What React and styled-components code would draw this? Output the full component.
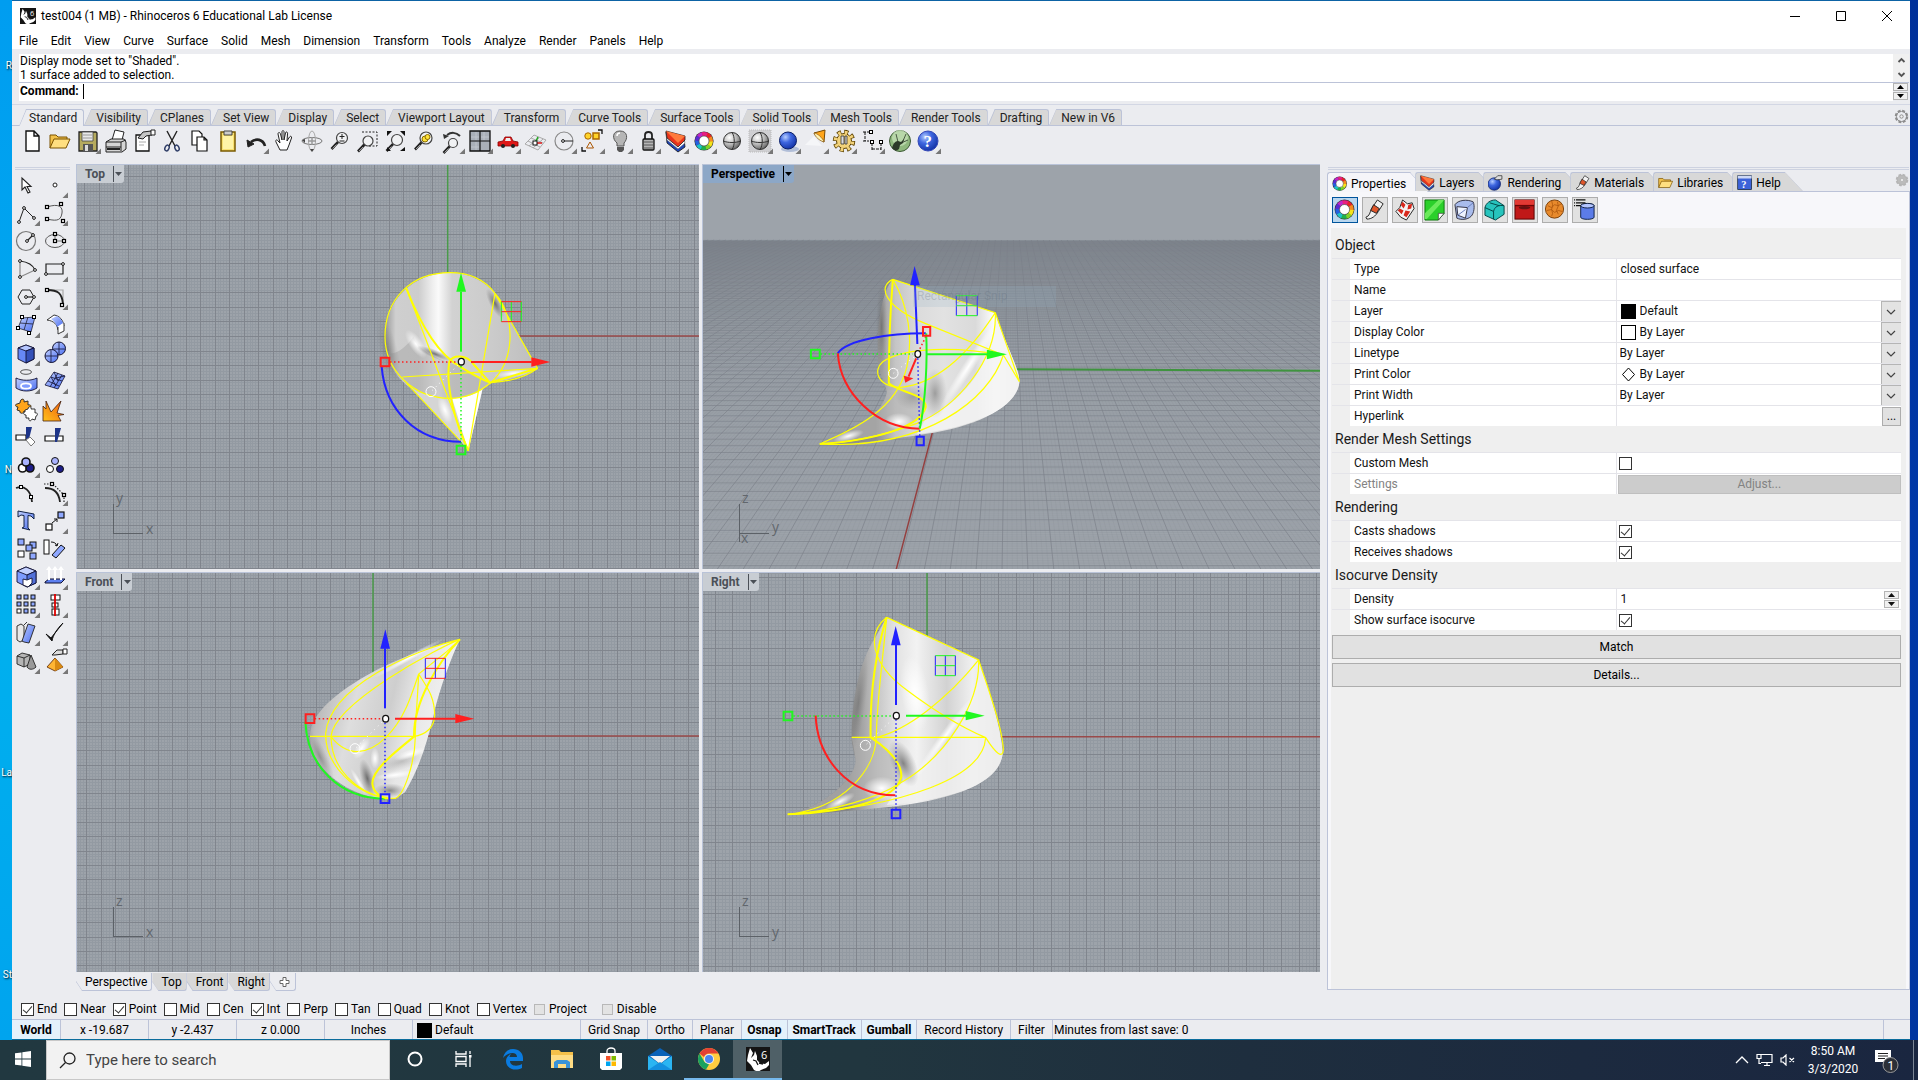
import React from 'react';
import styled, { createGlobalStyle, css } from 'styled-components';

const UI = "Roboto, 'Open Sans', 'Liberation Sans', sans-serif";
const LINE = '#bcc3d8';
const CHROME = '#ebecf0';

const GlobalStyle = createGlobalStyle`
  *, *::before, *::after { box-sizing: border-box; }
  body { margin: 0; font-family: ${UI}; font-size: 12px; line-height: 14px; color: #000; background: #1d2c3c; }
  button, input, select { font: inherit; color: inherit; margin: 0; padding: 0; border: 0; background: none; }
  svg { display: block; }
`;

/* ---------- shell ---------- */
const Screen = styled.div`
  height: 100vh;
  display: flex;
  flex-direction: column;
  overflow: hidden;
`;
const Desktop = styled.div`
  flex: 1;
  min-height: 0;
  display: grid;
  grid-template-columns: 12px minmax(0, 1fr) 8px;
`;
const DesktopEdge = styled.div`
  position: relative;
  overflow: hidden;
  background: ${p => (p.$right ? 'linear-gradient(#00309a, #0038a8 50%, #0035a0)' : 'linear-gradient(#009df0, #00a5ef 30%, #00b0ee 60%, #00a4ee)')};
`;
const DesktopLabel = styled.span`
  position: absolute;
  right: 0;
  top: ${p => p.$y}px;
  font-size: 10px;
  color: #fff;
  text-shadow: 1px 1px 2px #000;
  white-space: nowrap;
`;
const AppWindow = styled.div`
  display: flex;
  flex-direction: column;
  min-height: 0;
  background: ${CHROME};
  border-top: 1px solid #0d63a5;
  border-bottom: 1px solid #0a6c9c;
`;

/* ---------- title, menu, command ---------- */
const TitleBar = styled.header`
  height: 30px;
  flex: none;
  display: flex;
  align-items: center;
  background: #fff;
  padding-left: 8px;
`;
const TitleText = styled.h1`
  flex: 1;
  margin: 0;
  padding-left: 5px;
  font-size: 12px;
  font-weight: 400;
`;
const WinButton = styled.button`
  width: 46px;
  height: 28px;
  display: grid;
  place-items: center;
`;
const MenuBar = styled.nav`
  height: 18px;
  flex: none;
  display: flex;
  align-items: center;
  gap: 13px;
  background: #fff;
  padding: 2px 0 0 7px;
`;
const CommandArea = styled.section`
  margin: 5px 1px 0 7px;
  display: grid;
  grid-template-columns: minmax(0, 1fr) 16px;
  flex: none;
`;
const History = styled.div`
  background: #fff;
  border-bottom: 1px solid ${LINE};
  height: 29px;
  padding-left: 1px;
`;
const Scroller = styled.div`
  background: #f0f0f0;
  border-bottom: 1px solid ${LINE};
  display: grid;
  place-items: center;
`;
const Prompt = styled.label`
  height: 18px;
  background: #fff;
  display: flex;
  align-items: center;
  padding: 0 0 2px 1px;
  font-weight: 700;
  gap: 4px;
`;
const PromptInput = styled.input`
  flex: 1;
  height: 15px;
  outline: 0;
  border-left: 1px solid #000;
`;
const Spinner = styled.div`
  width: 15px;
  margin-right: ${p => p.$inset || 0}px;
  display: grid;
  grid-template-rows: 8px 8px;
  gap: 1px;
`;
const SpinButton = styled.button`
  border: 1px solid #b4b4b4;
  background: #f0f0f0;
  display: grid;
  place-items: center;
`;

/* ---------- toolbar ---------- */
const ToolTabs = styled.div`
  margin-top: 3px;
  padding: 4px 0 0 7px;
  height: 22px;
  flex: none;
  display: flex;
  border-top: 1px solid #d3d7e4;
  border-bottom: 1px solid ${LINE};
`;
const ToolTab = styled.button`
  position: relative;
  height: ${p => (p.$active ? 17 : 16)}px;
  padding: 0 6px 0 ${p => (p.$active ? 10 : 12)}px;
  color: #222;
  background: ${p => (p.$active ? CHROME : '#d8d8d8')};
  border-top: 1px solid ${LINE};
  border-right: 1px solid ${LINE};
  border-top-right-radius: 3px;
  clip-path: polygon(7px 0, 100% 0, 100% 100%, 0 100%);
  white-space: nowrap;
  &::before {
    content: '';
    position: absolute;
    left: 3px;
    top: 0;
    bottom: 0;
    width: 1px;
    background: ${LINE};
    transform: skewX(-23deg);
  }
`;
const TabGear = styled.button`
  margin-left: auto;
  width: 17px;
  height: 15px;
  display: grid;
  place-items: center;
`;
const ToolRow = styled.div`
  height: 38px;
  flex: none;
  display: flex;
  padding: 1px 0 0 6px;
`;
const ToolButton = styled.button`
  width: 28px;
  height: 28px;
  flex: none;
`;

/* ---------- main area ---------- */
const Main = styled.main`
  flex: 1;
  min-height: 0;
  display: grid;
  grid-template-columns: 64px minmax(0, 1244fr) 7px minmax(0, 583fr);
`;
const SideTools = styled.aside`
  padding: 3px 0 0 1px;
`;
const Grip = styled.div`
  height: 3px;
  border-top: 1px solid #cdd2e0;
  border-bottom: 1px solid #cdd2e0;
  margin: ${p => p.$m || '0'};
`;
const SideGrid = styled.div`
  display: grid;
  grid-template-columns: 28px 28px;
  grid-auto-rows: 28px;
  margin-top: 1px;
`;
const Center = styled.div`
  display: flex;
  flex-direction: column;
  min-height: 0;
`;
const Viewports = styled.div`
  flex: 1;
  min-height: 0;
  display: grid;
  grid-template-columns: minmax(0, 623fr) minmax(0, 618fr);
  grid-template-rows: minmax(0, 405fr) minmax(0, 400fr);
  gap: 3px;
`;
const ViewportBox = styled.section`
  position: relative;
  overflow: hidden;
  border: 1px solid #b9c3d8;
  border-width: 1px 0 0 1px;
  background: #9da3aa;
`;
const Scene = styled.svg`
  position: absolute;
  inset: 0;
  width: 100%;
  height: 100%;
`;
const ViewTitle = styled.button`
  position: absolute;
  left: 0;
  top: 0;
  height: 18px;
  display: flex;
  align-items: center;
  padding-left: 8px;
  border-bottom-right-radius: 3px;
  background: ${p => (p.$active ? '#8ca7c7' : '#c8cdd3')};
  color: ${p => (p.$active ? '#000' : '#4b5057')};
  font-weight: 700;
`;
const TitleDrop = styled.span`
  height: 16px;
  width: 11px;
  margin-left: 8px;
  display: grid;
  place-items: center;
  border-left: 1px solid currentColor;
`;
const AxisMark = styled.svg`
  position: absolute;
  left: 32px;
  bottom: 20px;
`;
const SnipGhost = styled.span`
  position: absolute;
  left: 210px;
  top: 121px;
  width: 143px;
  height: 21px;
  padding: 3px 4px;
  font-size: 12px;
  color: rgba(90, 105, 120, 0.25);
  background: rgba(150, 180, 200, 0.2);
`;
const ViewTabs = styled.div`
  height: 20px;
  flex: none;
  display: flex;
  padding-top: 1px;
`;
const ViewTab = styled.button`
  position: relative;
  height: 18px;
  padding: 0 4px 0 9px;
  background: ${p => (p.$plain ? CHROME : '#d8d8d8')};
  border-bottom: 1px solid ${LINE};
  border-right: 1px solid ${LINE};
  border-bottom-right-radius: 3px;
  clip-path: polygon(0 0, 100% 0, 100% 100%, 6px 100%, 0 9px);
  &::before {
    content: '';
    position: absolute;
    left: 2px;
    top: 8px;
    bottom: 0;
    width: 1px;
    background: ${LINE};
    transform: skewX(33deg);
  }
`;

/* ---------- properties panel ---------- */
const Panel = styled.aside`
  display: flex;
  flex-direction: column;
  min-height: 0;
  padding: 3px 0 2px;
`;
const PanelTabs = styled.div`
  display: flex;
  height: 22px;
  padding-top: 2px;
  flex: none;
  border-bottom: 1px solid ${LINE};
`;
const PanelTab = styled.button`
  position: relative;
  height: ${p => (p.$active ? 20 : 19)}px;
  display: flex;
  align-items: center;
  gap: 3px;
  padding: 2px 22px 0 4px;
  margin-right: -13px;
  white-space: nowrap;
  background: ${p => (p.$active ? '#f5f5f9' : '#d8d8d8')};
  border-top: 1px solid ${LINE};
  border-left: 1px solid ${LINE};
  border-top-left-radius: 3px;
  clip-path: polygon(0 0, calc(100% - 18px) 0, 100% 100%, 0 100%);
  &::before {
    content: '';
    position: absolute;
    right: 8px;
    top: 0;
    bottom: 0;
    width: 1px;
    background: ${LINE};
    transform: skewX(43deg);
  }
`;
const PanelBody = styled.div`
  flex: 1;
  min-height: 0;
  border: 1px solid ${LINE};
  border-top: 0;
  background: #f7f7fa;
  padding: 5px 3px 0;
  display: flex;
  flex-direction: column;
`;
const PageButtons = styled.div`
  display: flex;
  gap: 4px;
  padding-left: 1px;
  height: 31px;
  flex: none;
`;
const PageButton = styled.button`
  width: 26px;
  height: 26px;
  display: grid;
  place-items: center;
  border: 1px solid ${p => (p.$active ? '#00549c' : '#adadad')};
  background: ${p => (p.$active ? '#b9d6ee' : '#e1e1e1')};
`;
const Sheet = styled.div`
  flex: 1;
  min-height: 0;
  background: #efefef;
  padding: 4px 5px 0 1px;
`;
const GroupTitle = styled.h2`
  margin: 0;
  height: 26px;
  padding: 5px 3px 0;
  font-size: 14px;
  line-height: 16px;
  font-weight: 400;
  color: #1a1a1a;
`;
const PropRow = styled.div`
  height: 21px;
  display: grid;
  grid-template-columns: 18px minmax(0, 267fr) minmax(0, 285fr);
  border-top: 1px solid #e4e4e9;
  color: ${p => (p.$dim ? '#838383' : '#111')};
  & > * { background: #fff; display: flex; align-items: center; }
  & > :first-child { background: #efefef; }
`;
const PropLabel = styled.label`
  padding-left: 4px;
  border-right: 1px solid #e4e4e9;
`;
const PropValue = styled.div`
  padding-left: ${p => (p.$pad ?? 4)}px;
  gap: 4px;
`;
const Combo = styled.select`
  appearance: none;
  flex: 1;
  min-width: 0;
  height: 18px;
  outline: 0;
`;
const TextBox = styled.input`
  flex: 1;
  min-width: 0;
  height: 18px;
  outline: 0;
`;
const DropMark = styled.span`
  width: 20px;
  height: 20px;
  display: grid;
  place-items: center;
  background: #e3e3e3;
  border: 1px solid #b5b5b5;
  border-width: 1px 0 0 1px;
`;
const Swatch = styled.span`
  width: 15px;
  height: 15px;
  border: 1px solid #000;
  background: ${p => p.$c};
`;
const MoreButton = styled.button`
  width: 19px;
  height: 19px;
  border: 1px solid #adadad;
  background: #e1e1e1;
`;
const AdjustButton = styled.button`
  flex: 1;
  height: 19px;
  border: 1px solid #bfbfbf;
  background: #ccc;
  color: #838383;
`;
const PageActions = styled.div`
  display: grid;
  gap: 4px;
  margin-top: 5px;
`;
const WideButton = styled.button`
  width: 100%;
  height: 24px;
  border: 1px solid #adadad;
  background: #e1e1e1;
`;
const Check = styled.input.attrs({ type: 'checkbox' })`
  appearance: none;
  position: relative;
  width: 13px;
  height: 13px;
  flex: none;
  border: 1px solid #333;
  background: #fff;
  &:checked::before {
    content: '';
    position: absolute;
    left: 3px;
    top: 0;
    width: 5px;
    height: 9px;
    border: solid #333;
    border-width: 0 1px 1px 0;
    transform: rotate(40deg);
  }
  &:disabled { border-color: #b8b8b8; background: #e3e3e3; width: 11px; height: 11px; }
`;

/* ---------- osnap and status ---------- */
const OsnapBar = styled.div`
  height: 27px;
  flex: none;
  display: flex;
  align-items: center;
  gap: 7px;
  padding: 7px 0 0 9px;
`;
const OsnapItem = styled.label`
  display: flex;
  align-items: center;
  gap: ${p => (p.$wide ? 4 : 3)}px;
  margin-right: ${p => (p.$wide ? 8 : 0)}px;
`;
const StatusBar = styled.footer`
  height: 20px;
  flex: none;
  display: flex;
  border-top: 1px solid ${LINE};
`;
const StatusCell = styled.button`
  display: flex;
  align-items: center;
  justify-content: ${p => (p.$start ? 'flex-start' : 'center')};
  gap: 3px;
  padding: 1px ${p => (p.$w ? 4 : p.$on ? 5 : 7)}px 0;
  white-space: nowrap;
  ${p => p.$w && css`width: ${p.$w}px;`}
  ${p => p.$on && css`background: #e4f1fb; font-weight: 700;`}
  border-right: 1px solid ${LINE};
`;
const StatusNote = styled.span`
  flex: 1;
  padding: 3px 0 0 1px;
  border-right: 1px solid ${LINE};
  margin-right: 26px;
`;

/* ---------- taskbar ---------- */
const Taskbar = styled.footer`
  height: 40px;
  flex: none;
  display: flex;
  background: linear-gradient(90deg, #213840, #21363f 45%, #1e2e3e 65%, #1a2640);
  color: #fff;
`;
const TaskButton = styled.button`
  width: ${p => (p.$start ? 46 : 49)}px;
  display: grid;
  place-items: center;
  border-bottom: 2px solid ${p => (p.$open ? '#76b9ed' : 'transparent')};
  background: ${p => (p.$active ? '#4f6067' : 'transparent')};
  background-clip: padding-box;
`;
const SearchBox = styled.label`
  width: 344px;
  display: flex;
  align-items: center;
  gap: 10px;
  padding-left: 12px;
  background: #f2f2f2;
  border: 1px solid #c8c8c8;
`;
const SearchInput = styled.input`
  flex: 1;
  min-width: 0;
  font-size: 15px;
  outline: 0;
  color: #444;
  &::placeholder { color: #444; opacity: 1; }
`;
const Tray = styled.div`
  margin-left: auto;
  display: flex;
  align-items: center;
`;
const TrayButton = styled.button`
  width: ${p => p.$w || 23}px;
  height: 40px;
  display: grid;
  place-items: center;
`;
const Clock = styled.time`
  width: 68px;
  text-align: center;
  line-height: 18px;
`;
const ShowDesktop = styled.button`
  width: 5px;
  height: 40px;
  border-left: 1px solid #7b8594;
  margin-left: 8px;
`;

/* ---------- drawings ---------- */
const K = { fill: 'none', stroke: '#222', strokeWidth: 1.2 };
const Tri = () => <path d="M27 21.500v5.500h-5.500z" fill="#777" stroke="none" />;
const Dot = ({ x, y }) => <rect x={x - 1.5} y={y - 1.5} width="3" height="3" fill="#fff" stroke="#000" />;
const Pin = ({ x, y }) => <circle cx={x} cy={y} r="1.4" fill="#fff" stroke="#000" strokeWidth=".9" />;
const Lens = ({ x = 15, y = 11, r = 5.5, fill = '#f1f2f4' }) => (
  <g>
    <path d={`M${x - r * 0.7} ${y + r * 0.7}L${x - r - 5} ${y + r + 5.5}`} stroke="#222" strokeWidth="2.6" />
    <path d={`M${x - r} ${y + r + 1}L${x - r - 4} ${y + r + 5}`} stroke="#999" strokeWidth="1" />
    <circle cx={x} cy={y} r={r} fill={fill} stroke="#444" strokeWidth="1.2" />
  </g>
);
const Wheel = ({ cx = 14, cy = 14, r = 7, w = 4 }) => {
  const cols = ['#e8202a', '#f58a1f', '#f6e21c', '#7fd12a', '#1fb04b', '#1cc3c9', '#2460e0', '#5a2bd0', '#c026c8', '#e82080'];
  const n = cols.length;
  return (
    <g>
      <circle cx={cx} cy={cy} r={r + w / 2 + 0.6} fill="#333" />
      {cols.map((c, i) => {
        const a = (i / n) * 2 * Math.PI - 1.2;
        const b = ((i + 1.1) / n) * 2 * Math.PI - 1.2;
        return <path key={c} d={`M${cx + r * Math.cos(a)} ${cy + r * Math.sin(a)}A${r} ${r} 0 0 1 ${cx + r * Math.cos(b)} ${cy + r * Math.sin(b)}`} stroke={c} strokeWidth={w} fill="none" />;
      })}
      <circle cx={cx} cy={cy} r={r - w / 2} fill="#fff" stroke="#444" strokeWidth=".6" />
    </g>
  );
};
const LayersArt = () => (
  <g strokeLinejoin="round">
    <path d="M4 5l1 11 11 9 7-5-1-8z" fill="#1d46b8" stroke="#111" strokeWidth=".8" />
    <path d="M4 5l1 8 11 9 7-6-1-4z" fill="#fff" stroke="#555" strokeWidth=".5" />
    <path d="M4 4l1 7 11 9 7-7v-4z" fill="#e8341c" stroke="#222" strokeWidth=".8" />
    <path d="M4 4l19 5-7 7z" fill="#ff7a3c" />
  </g>
);
const Folder = () => (
  <g stroke="#7a5200" strokeLinejoin="round">
    <path d="M4 21V8h6l2 2h9v3" fill="#f2c14a" />
    <path d="M4 21l4-9h16l-4 9z" fill="#ffdf80" />
  </g>
);
const Ball = ({ fill }) => (
  <g>
    <circle cx="14" cy="14" r="8.5" fill={fill} stroke="#333" />
    <path d="M14 5.500c3 4 3 13 0 17M5.500 14c4 2 13 2 17 0" fill="none" stroke="#333" />
  </g>
);
const RhinoLogo = ({ size }) => (
  <svg width={size} height={size} viewBox="0 0 24 24" aria-hidden="true">
    <path d="M0 0h24v24H0z" fill="#141414" />
    <path d="M4 1l3 5-2 5 3-3 1-4 2 5v4l3 3 5 1 4-3v4l-3 3-5 2-3 2-4-2-3-5-4-4 1-6z" fill="#fff" />
    <path d="M7 13l3 1 2 4M13 16l4 1" stroke="#141414" fill="none" strokeWidth="1.3" />
    <text x="15" y="12" fontSize="11" fontFamily="Open Sans, sans-serif" fill="#fff">6</text>
  </svg>
);
const GearArt = ({ s = 15, fill = 'none', c = '#8d8d8d' }) => (
  <svg width={s} height={s} viewBox="0 0 16 16">
    <circle cx="8" cy="8" r="6" fill={fill} stroke={c} strokeWidth="2.4" strokeDasharray="3 1.710" />
    <circle cx="8" cy="8" r="5.400" fill={fill} stroke={c} />
    <circle cx="8" cy="8" r="1.800" fill="#f0f0f0" stroke={c} />
  </svg>
);

const art = {
  new: <path d="M8 4h8l5 5v15H8z M16 4v5h5" fill="#fff" stroke="#111" strokeWidth="1.4" />,
  open: <Folder />,
  save: <g><path d="M5 5h17l1 1v18H5z" fill="#b5aa5e" stroke="#222" strokeWidth="1.3" /><path d="M8 5h11v9H8z" fill="#e9e9e9" stroke="#444" strokeWidth=".8" /><path d="M9 17h10v7H9z" fill="#555" /><path d="M11 18h3v6h-3z" fill="#ddd" /><path d="M9 8h9M9 11h9" stroke="#999" /><Tri /></g>,
  print: <g stroke="#222" strokeLinejoin="round"><path d="M10 13l3-10 9 2-2 8z" fill="#fff" /><path d="M4 15l5-3h13l2 3v7l-4 3H4z" fill="#d5d5d5" /><path d="M4 15h15l5-2M4 20h15M19 15v9" fill="none" /><path d="M5 22h13" strokeWidth="2" /></g>,
  props: <g><path d="M6 8h13v16H6z" fill="#fff" stroke="#111" strokeWidth="1.3" /><path d="M9 15h7M9 18h5" stroke="#aaa" /><path d="M8 11l5-6 8-1 1 4-6 1-3 3z" fill="#c5c5c5" stroke="#222" /><path d="M21 3h4v5h-4z" fill="#fff" stroke="#222" /></g>,
  cut: <g {...K} strokeWidth="1.400"><path d="M9 4l8 15M19 4l-8 15" /><ellipse cx="9" cy="21" rx="2" ry="3" transform="rotate(25 9 21)" stroke="#2d3c66" /><ellipse cx="19" cy="21" rx="2" ry="3" transform="rotate(-25 19 21)" stroke="#2d3c66" /></g>,
  copy: <g fill="#fff" stroke="#111" strokeWidth="1.200"><path d="M6 4h7l3 3v11H6z" /><path d="M11 10h7l3 3v11H11z M18 10v3h3" /></g>,
  paste: <g><path d="M7 5h14v19H7z" fill="#f8e071" stroke="#7a5a00" strokeWidth="1.500" /><path d="M10 4h8v4h-8z" fill="#ccc" stroke="#444" /><path d="M9 9h10v13H9z" fill="#fff3a6" /></g>,
  undo: <g><path d="M23 19c-2-7-9-8-14-4" fill="none" stroke="#222" strokeWidth="2.600" /><path d="M5 13l1 7 6-3z" fill="#222" stroke="#222" /><Tri /></g>,
  hand: <path d="M10 23l-4-8c-1-2 1-3 2-1l2 2-2-9c0-2 2-2 2.500 0l1.500 6V5c0-2 2-2 2 0v8l1.500-7c.5-2 2.500-1 2 1L17 14l2.500-4c1-1.500 2.500-.5 2 1L19 18l-2 5z" fill="#fff" stroke="#222" />,
  rotate: <g fill="none"><ellipse cx="14" cy="14" rx="10" ry="3.500" stroke="#777" /><ellipse cx="14" cy="14" rx="3.500" ry="10" stroke="#aaa" /><path d="M14 10v8M10 14h8" stroke="#999" strokeWidth="1.500" /><path d="M14 25l-2-3h4zM4 13l3 3v-4z" fill="#444" /></g>,
  zoomDyn: <g><Lens x={16} /><path d="M13.500 9.500h5M16 7v5M13.500 14h5" stroke="#222" /></g>,
  zoomWin: <g><path d="M8 5h15v14H14" fill="none" stroke="#222" strokeDasharray="2 1.500" /><Lens x={14} y={14} r={5} /></g>,
  zoomExt: <g><Lens x={15} y={13} r={5.5} /><path d="M5 9V4h5zM23 9V4h-5zM23 20v4h-5zM5 20v4h4z" fill="#111" /></g>,
  zoomSel: <g><Lens x={16} r={6} /><circle cx="15" cy="12" r="3" fill="#ffe23a" stroke="#8a6d00" /><circle cx="17.500" cy="10" r="2.500" fill="#ffe23a" stroke="#8a6d00" /></g>,
  undoView: <g><Lens x={15} y={16} r={4.500} /><path d="M22 9c-4-4-9-4-13-1" fill="none" stroke="#333" strokeWidth="2" /><path d="M5 7l1 5 5-3z" fill="#333" /><Tri /></g>,
  views: <g><path d="M4 4h20v20H4z" fill="#a9afb8" stroke="#111" strokeWidth="1.300" /><path d="M14 4v20M4 14h20" stroke="#111" strokeWidth="1.200" /><path d="M5 10h8M10 5v8M15 10h8M18 5v8M5 20h8M10 15v8" stroke="#c7ccd2" strokeWidth=".7" /><Tri /></g>,
  car: <g><path d="M4 15l5-1 2-4h6l2 4 5 1v4H4z" fill="#e01818" stroke="#800" strokeWidth=".8" /><path d="M11 14l1-3h4l1 3z" fill="#eee" /><circle cx="9" cy="19" r="2" fill="#222" /><circle cx="19" cy="19" r="2" fill="#222" /><Tri /></g>,
  cplane: <g fill="none" stroke="#aaa"><path d="M3 17l9-9 12 5-8 10zM7 19l10-8M11 21l10-9M6 14l12 6M9 11l12 5" /><path d="M14 16h6" stroke="#d22" strokeWidth="1.600" /><path d="M13 16l3-6" stroke="#2a2" strokeWidth="1.600" /><rect x="11" y="14" width="4" height="4" fill="#fff" stroke="#111" /><Tri /></g>,
  radius: <g><circle cx="14" cy="14" r="9" {...K} stroke="#888" /><path d="M14 14h9" stroke="#222" /><Pin x={13} y={14} /><Tri /></g>,
  shapes: <g><circle cx="10" cy="9" r="3.200" fill="#ffd42a" stroke="#a60" /><rect x="15" y="6" width="6" height="6" fill="#ffd42a" stroke="#a60" strokeWidth="1.500" /><path d="M12 15l3.500 6h-7z" fill="none" stroke="#a50" /><path d="M20 3h4v4M4 20v4h4" fill="none" stroke="#111" strokeWidth="1.300" /><Tri /></g>,
  bulb: <g><path d="M14 4c8 0 8 8 4 12v3h-7v-3C6 12 6 4 14 4z" fill="#b5b5b5" stroke="#555" /><path d="M11 20h7v3l-2 2h-3l-2-2z" fill="#555" /><path d="M11 9c0-2 1-3 3-3" stroke="#fff" strokeWidth="1.500" fill="none" /><Tri /></g>,
  lock: <g><path d="M11 13V8c0-4 7-4 7 0v5" fill="none" stroke="#222" strokeWidth="1.800" /><rect x="9" y="12" width="11" height="11" rx="1" fill="#b5b5b5" stroke="#111" strokeWidth="1.300" /><path d="M10 15h9M10 18h9M10 21h9" stroke="#555" /><Tri /></g>,
  layers: <g><LayersArt /><Tri /></g>,
  layersTab: <LayersArt />,
  wheel: <g><Wheel /><Tri /></g>,
  wheelPage: <Wheel r={7.5} w={4.5} />,
  shade: <Ball fill="url(#gGray)" />,
  shadeTex: <g><path d="M3 3h22v22H3z" fill="#cfcfd2" stroke="#bbb" strokeDasharray="1 1" /><Ball fill="url(#gGray)" /><Tri /></g>,
  render: <g><ellipse cx="16" cy="22" rx="9" ry="3" fill="#8aa0c8" opacity=".6" /><circle cx="14" cy="13.500" r="8.500" fill="url(#gBlue)" stroke="#0a1e66" /><Tri /></g>,
  spot: <g><path d="M3 18l9-9 8 10z" fill="#fff" opacity=".5" /><path d="M12 6l11-3-1 12c-2-1-8-5-10-9z" fill="#ffa51a" stroke="#7a4a00" /><path d="M12 6c3 0 9 5 10 9-4-1-9-5-10-9z" fill="#fff2b5" stroke="#7a4a00" strokeWidth=".6" /><Tri /></g>,
  gear: <g><circle cx="14" cy="14" r="8.500" fill="none" stroke="#5d4300" strokeWidth="5.500" strokeDasharray="3.800 2.870" /><circle cx="14" cy="14" r="7.500" fill="#f2d27a" stroke="#5d4300" /><circle cx="14" cy="14" r="8.500" fill="none" stroke="#f2d27a" strokeWidth="3.800" strokeDasharray="2.600 4.070" strokeDashoffset="-.6" /><path d="M11 9h3v8h-3zM15 9h2v8h-2z" fill="#ddd" stroke="#333" strokeWidth=".8" /><Tri /></g>,
  dims: <g fill="none" stroke="#111"><path d="M7 5v9M5 5h6M5 14h6M14 16v7M23 16v7M14 22h9" strokeDasharray="3 1" /><Dot x={13} y={5} /><Dot x={14} y={15} /><Dot x={23} y={15} /><Tri /></g>,
  hopper: <g><circle cx="14" cy="14" r="10.500" fill="#8fb87e" stroke="#3c5a34" /><circle cx="14" cy="11" r="8" fill="#c5e2b8" opacity=".75" /><path d="M6 21c1-4 3-7 6-7l3 1 3-3-1 4-3 2-1 4c-2 2-5 2-7-1z" fill="#2d3a2a" /><path d="M12 15l-2-8M15 16l7-3M17 14l3-7" stroke="#2d3a2a" strokeWidth=".8" /></g>,
  help: <g><circle cx="14" cy="14" r="10" fill="url(#gBlue)" stroke="#3548b8" /><text x="9.500" y="20" fontSize="17" fontWeight="700" fontFamily="Liberation Serif, serif" fill="#fff">?</text><Tri /></g>,

  pointer: <path d="M9 7v12l3-3 3 6 2-1-3-5.500h4z" fill="#fff" stroke="#222" strokeWidth="1.100" />,
  point: <g><circle cx="14" cy="14" r="2" fill="#fff" stroke="#222" /><Tri /></g>,
  polyline: <g {...K}><path d="M6 23l5-14 10 10" strokeWidth="1" /><Pin x={6} y={23} /><Pin x={11} y={9} /><Pin x={21} y={19} /><Tri /></g>,
  curve: <g {...K}><path d="M6 8c12-4 16 0 15 6s-3 9-15 6" stroke="#555" strokeWidth="1" /><Dot x={6} y={8} /><Dot x={20} y={5} /><Dot x={6} y={20} /><Dot x={22} y={22} /><Tri /></g>,
  circle: <g {...K}><circle cx="13" cy="14" r="9.500" stroke="#777" /><path d="M14 14l6-6" /><Pin x={14} y={14} /><Pin x={20} y={8} /><Tri /></g>,
  ellipse: <g {...K}><ellipse cx="14" cy="14" rx="9.500" ry="6.500" stroke="#555" strokeWidth="1" /><path d="M14 14h9M14 14V7" stroke="#777" /><Dot x={14} y={14} /><Dot x={14} y={7} /><Dot x={23} y={14} /><Tri /></g>,
  arc: <g {...K}><path d="M7 22V6" stroke="#888" /><path d="M7 6c8 1 13 4 15 9" /><path d="M22 15L7 22" stroke="#888" /><Pin x={7} y={6} /><Pin x={22} y={15} /><Pin x={7} y={22} /><Tri /></g>,
  rect: <g {...K}><path d="M5 9h17v10H5z" /><Pin x={22} y={9} /><Pin x={5} y={19} /><Tri /></g>,
  polygon: <g {...K}><path d="M5 14l4-7h8l4 7-4 7H9z" strokeWidth="1" /><path d="M13 14h8" /><Pin x={13} y={14} /><Pin x={21} y={14} /><Tri /></g>,
  fillet: <g {...K}><path d="M6 7h16v14" stroke="#aaa" /><path d="M6 7c11 0 15 3 16 14" strokeWidth="1.900" /><Dot x={6} y={7} /><Dot x={21} y={22} /><Tri /></g>,
  surf: <g><path d="M9 7l13-1-4 15-13-4z" fill="url(#gLite)" stroke="#223" strokeWidth=".8" /><path d="M15 6l-4 13M7 12l13 1" stroke="#223" strokeWidth=".8" /><Dot x={9} y={6} /><Dot x={21} y={6} /><Dot x={5} y={17} /><Dot x={16} y={22} /><Tri /></g>,
  blend: <g stroke="#222" strokeWidth=".9"><path d="M6 9l7-5c6 1 9 5 10 11l-6 4C16 13 13 10 6 9z" fill="#fff" /><path d="M10 8l6-3c3 2 5 4 6 7l-6 4c-1-4-3-6-6-8z" fill="url(#gLite)" stroke="none" /><path d="M17 16v7l6-3v-8" fill="#fff" /><Tri /></g>,
  box: <g stroke="#113" strokeLinejoin="round" strokeWidth=".9"><path d="M5 9l8-3 8 3v11l-8 4-8-4z" fill="#6688f5" /><path d="M5 9l8-3 8 3-8 3z" fill="#b5c6ff" /><path d="M13 12v12l8-4V9z" fill="#3450b8" /><Tri /></g>,
  boolean: <g stroke="#113"><circle cx="18" cy="9.500" r="6.500" fill="url(#gLite)" /><circle cx="10.500" cy="17" r="6.500" fill="url(#gLite)" /><path d="M4 17h13M10 11v13M12 10h12M18 3v13" strokeWidth=".8" fill="none" /><Tri /></g>,
  project: <g stroke="#113" strokeWidth=".9"><ellipse cx="13" cy="5" rx="5.500" ry="2.300" fill="none" stroke="#444" /><path d="M3 11c6 3 15 3 21 0v10c-6 4-15 4-21 0z" fill="url(#gLite)" /><ellipse cx="13" cy="19" rx="5" ry="2.700" fill="#7f9cff" stroke="#fff" strokeWidth="1.800" /><Tri /></g>,
  mesh: <g stroke="#113" strokeWidth=".8"><path d="M13 5l11 4-7 13-13-4z" fill="url(#gLite)" /><path d="M17 6l-8 14M21 8l-8 13M10 10l11 4M7 14l11 5M13 5l4 9M10 10l5 9M24 9l-9 2" fill="none" /><Tri /></g>,
  join: <g stroke="#222" strokeWidth=".9"><path d="M4 9l3-1c0-5 5-5 4-1l4-1v4c4-1 4 3 0 4l-1 3-3-1c0 3-5 3-4 0l-3-1 1-3c-3 0-3-3-1-3z" fill="#ffa51a" /><path d="M12 15l3-1c0-3 4-3 3 0l4 0v4c3-1 3 3 1 3l-1 4-3-1c-1 3-4 2-3-1l-3 0 0-3c-3 0-3-3-1-3z" fill="#fff" /></g>,
  explode: <path d="M2 11l3 3V6l5 11L20 6l-4 12 7 1.500-6 1 3 5.500H2z" fill="url(#gFire)" stroke="#421" strokeWidth=".8" />,
  trim: <g stroke="#111"><path d="M3 12h10v5H3z" fill="#fff" strokeWidth="1.200" /><path d="M13 4h6l-3 12h-3z" fill="#1d3488" stroke="none" /><path d="M13 17l4-3 5 5-4 4z" fill="#fff" stroke="#777" /></g>,
  split: <g stroke="#111"><path d="M4 13h18v5H4z" fill="#fff" strokeWidth="1.200" /><path d="M14 5h6l-4 14h-2z" fill="#1d3488" stroke="none" /></g>,
  group: <g stroke="#111" strokeWidth="1.600"><circle cx="9.500" cy="17" r="4" fill="#fff" /><circle cx="17" cy="17" r="4" fill="#1d1d88" /><circle cx="13" cy="11" r="4" fill="#a9b2ff" /><Tri /></g>,
  ungroup: <g stroke="#111"><circle cx="14" cy="10" r="3.500" fill="#a9b2ff" /><circle cx="9" cy="18" r="3.500" fill="#fff" /><circle cx="19" cy="18" r="3.500" fill="#1d1d88" /></g>,
  pts: <g {...K} strokeWidth="1.800"><path d="M3 9c8-3 15 2 16 14" /><g strokeWidth="1"><Dot x={8} y={8} /><Dot x={18} y={18} /></g></g>,
  cpts: <g {...K}><path d="M4 9c9 0 14 5 15 14" strokeWidth="1.800" /><path d="M3 5h9l11 11v8" strokeDasharray="1.500 1.500" /><Dot x={11} y={5} /><Dot x={23} y={16} /><Tri /></g>,
  text: <path d="M5 4l16 3v5l-3-3-3-.5V21l2 2-8-2 2-1V8.500L8 8l-3 2z" fill="url(#gLite)" stroke="#124" />,
  move: <g stroke="#111"><rect x="5" y="17" width="6" height="6" fill="#fff" strokeWidth="1.200" /><rect x="17" y="5" width="6" height="6" fill="#8fa8ff" strokeWidth="1.200" /><path d="M11 16l5-4M13 12h3v3" fill="none" /><Tri /></g>,
  copies: <g stroke="#111"><rect x="5" y="4" width="6" height="6" fill="#8fa8ff" /><rect x="17" y="7" width="6" height="6" fill="#8fa8ff" /><rect x="13" y="10" width="6" height="6" fill="#8fa8ff" /><rect x="5" y="16" width="6" height="6" fill="#fff" /><rect x="17" y="18" width="6" height="6" fill="#8fa8ff" /></g>,
  rotate2: <g stroke="#111"><rect x="3" y="5" width="5" height="14" fill="#fff" /><path d="M11 20l9-10 4 3-9 10z" fill="#8fa8ff" /><path d="M10 7c3 0 5 1 6 4M14 10l2 1 1-3" fill="none" strokeWidth="1" /></g>,
  cage: <g stroke="#113" strokeLinejoin="round" strokeWidth=".9"><path d="M4 8l9-4 10 4v12l-9 4-10-5z" fill="#7d9bff" /><path d="M4 8l9-4 10 4-9 4z" fill="#c3d0ff" /><path d="M14 12v12l9-4V8z" fill="#5270d8" /><path d="M10 16l4 1 5-2v5l-4 4-5-2z" fill="#fff" /><Tri /></g>,
  extrude: <g><path d="M4 19l4-3h16l-4 4H4z" fill="#5d80f0" stroke="#113" /><path d="M8 17V6M14 17V6M20 17V6" stroke="#fff" strokeWidth="2" /><path d="M8 3l3 4H5zM14 3l3 4h-6zM20 3l3 4h-6z" fill="#fff" /><Tri /></g>,
  array: <g stroke="#111">{[4, 11, 18].map(x => [4, 11, 18].map(y => <rect key={`${x}-${y}`} x={x} y={y} width="4" height="4" fill={x === 4 && y === 18 ? '#fff' : '#8fa8ff'} />))}<Tri /></g>,
  align: <g stroke="#111" fill="#fff"><rect x="10" y="4" width="9" height="5" /><rect x="11" y="12" width="6" height="4" /><rect x="11" y="18" width="7" height="6" /><path d="M14 3v22" stroke="#d00" strokeWidth="1.800" /><Tri /></g>,
  bend: <g stroke="#222" strokeWidth=".9"><path d="M4 7l4-2 3 2v14l-4 2-3-2z" fill="#e8e8e8" /><path d="M11 6l3-3M9 22l6-17 7 2-6 17-5-1z" fill="url(#gLite)" /><Tri /></g>,
  check: <g><path d="M5 15l5 4L22 4C16 10 12 16 11 22z" fill="#111" stroke="#111" /><Tri /></g>,
  solids: <g stroke="#222" strokeLinejoin="round" strokeWidth=".9"><path d="M4 9l5-3 8 2v9l-6 3-7-3z" fill="#b5b5b5" /><path d="M4 9l7 2v9M11 11l6-3" fill="none" /><path d="M18 8l5 12c-3 3-7 3-9 0z" fill="#999" /><Tri /></g>,
  pyramid: <g><path d="M14 11l8 9-8 4-8-4z" fill="#ffb533" stroke="#631" strokeWidth=".9" /><path d="M14 11v13l8-4z" fill="#d98a12" /><path d="M11 8l5-5h6v4l-8 1z" fill="#ddd" stroke="#222" /><path d="M22 2h4v5h-4z" fill="#fff" stroke="#222" /><Tri /></g>,

  tube: <g stroke="#222"><path d="M5 22c4-1 4-5 6-9l6-9 6 4-5 8c-3 5-7 8-12 8z" fill="#f3f3f3" /><path d="M13 9l6 4-3 5-6-3z" fill="#e0562a" /></g>,
  texture: <g stroke="#222" strokeLinejoin="round"><path d="M12 4l5 4 5-1 2 6-8 12-6-3-5-6 4-4z" fill="#f3f3f3" /><path d="M12 6l3 3-2 4-3-4zM18 9l4-1-1 5-4 1zM9 13l4 2-2 4-4-4zM15 15l5 1-4 6-3-2z" fill="#d8281c" stroke="none" /></g>,
  decal: <g><path d="M4 4h20v14l-6 7H4z" fill="#2bd02b" stroke="#0a780a" /><path d="M4 18L18 4h6L6 24H4z" fill="#6bea5b" /><path d="M18 25v-7h6z" fill="#fff" stroke="#333" strokeWidth=".7" /></g>,
  cubeBlue: <g stroke="#334" strokeLinejoin="round"><path d="M4 9c3-5 13-6 19-3 2 4 1 12-2 15-4 4-11 4-15 2z" fill="#a9bcec" /><path d="M6 11l11 1-2 11-8-3z" fill="#eef3ff" /><path d="M17 12l6-5M7 20l8-6" stroke="#6478b8" /></g>,
  cubeTeal: <g stroke="#044" strokeLinejoin="round"><path d="M4 12c1-5 6-8 11-8l9 6v9l-9 6-11-5z" fill="#27c4bd" /><path d="M4 12l9 4c1-5 5-7 11-6M13 16v8M9 7l10 3" fill="none" /></g>,
  book: <g><rect x="4" y="4" width="20" height="20" fill="#c01818" stroke="#500" /><path d="M4 4h20v5H4z" fill="#e23a34" /><path d="M4 10h20" stroke="#500" /><ellipse cx="14" cy="12" rx="6" ry="1.800" fill="#611" /></g>,
  orange: <g><circle cx="14" cy="13.500" r="9.500" fill="#e88a2c" stroke="#7a3d05" /><path d="M7 10l4 2 3-3 4 1 3-2M6 15l5-1 3 3 4-2 4 1M11 5l1 4-1 5 1 4-1 3M17 6l1 4-2 5 2 4" stroke="#a9540c" fill="none" strokeWidth=".8" /></g>,
  data: <g><path d="M10 10c0-3 14-3 14 0v12c0 3-14 3-14 0z" fill="#5c7ce8" stroke="#124" /><ellipse cx="17" cy="10" rx="7" ry="2.400" fill="#b4c5ff" stroke="#124" /><path d="M5 4h10M5 7h10M5 10h5M3 4h1M3 7h1M3 10h1" stroke="#111" strokeWidth="1.300" /></g>,
  renderTab: <g><circle cx="12" cy="16" r="9" fill="url(#gBlue)" stroke="#0a1e66" /><path d="M12 9l5-5h6v5l-7 1z" fill="#ddd" stroke="#222" /></g>,
  helpTab: <g><rect x="4" y="4" width="20" height="20" fill="#3c62d8" stroke="#123" /><path d="M4 4h20v4H4z" fill="#cdd8f5" /><text x="9" y="22" fontSize="15" fontWeight="700" fill="#fff" fontFamily="Liberation Serif, serif">?</text></g>,
};

const Icon = ({ name, size = 28, tight }) => (
  <svg width={size} height={size} viewBox={tight ? '3 3 23 23' : '0 0 28 28'} aria-hidden="true">{art[name]}</svg>
);

const Defs = styled.svg`
  position: absolute;
`;
const SharedDefs = () => (
  <Defs width="0" height="0" aria-hidden="true">
    <defs>
      <radialGradient id="gGray" cx=".35" cy=".3" r=".8"><stop offset="0" stopColor="#fff" /><stop offset=".5" stopColor="#b9b9b9" /><stop offset="1" stopColor="#555" /></radialGradient>
      <radialGradient id="gBlue" cx=".35" cy=".3" r=".8"><stop offset="0" stopColor="#b5cdff" /><stop offset=".4" stopColor="#3f67e0" /><stop offset="1" stopColor="#0b2a9c" /></radialGradient>
      <linearGradient id="gLite" x1="0" y1="0" x2="1" y2="1"><stop offset="0" stopColor="#c2d0ff" /><stop offset="1" stopColor="#4a6ef0" /></linearGradient>
      <linearGradient id="gFire" x1="0" y1="1" x2="1" y2="0"><stop offset="0" stopColor="#ffc21a" /><stop offset="1" stopColor="#f05a10" /></linearGradient>
      <linearGradient id="sTop"><stop offset="0" stopColor="#999" /><stop offset=".07" stopColor="#cfcfcf" /><stop offset=".22" stopColor="#cdcdcd" /><stop offset=".31" stopColor="#eee" /><stop offset=".35" stopColor="#fafafa" /><stop offset=".44" stopColor="#d2d2d2" /><stop offset=".7" stopColor="#cbcbcb" /><stop offset="1" stopColor="#bdbdbd" /></linearGradient>
      <linearGradient id="sFront" x1="0" y1=".1" x2="1" y2=".35"><stop offset="0" stopColor="#777" /><stop offset=".14" stopColor="#bcbcbc" /><stop offset=".35" stopColor="#dedede" /><stop offset=".58" stopColor="#cecece" /><stop offset=".72" stopColor="#e6e6e6" /><stop offset="1" stopColor="#f5f5f5" /></linearGradient>
      <linearGradient id="sRight"><stop offset=".28" stopColor="#848484" /><stop offset=".42" stopColor="#c8c8c8" /><stop offset=".5" stopColor="#e2e2e2" /><stop offset=".6" stopColor="#f2f2f2" /><stop offset=".74" stopColor="#d2d2d2" /><stop offset=".86" stopColor="#f0f0f0" /><stop offset="1" stopColor="#dcdcdc" /></linearGradient>
      <linearGradient id="sPersp"><stop offset=".28" stopColor="#8d8d8d" /><stop offset=".38" stopColor="#c5c5c5" /><stop offset=".5" stopColor="#dcdcdc" /><stop offset=".62" stopColor="#e2e2e2" /><stop offset=".78" stopColor="#dadada" /><stop offset=".88" stopColor="#fff" /><stop offset="1" stopColor="#e2e2e2" /></linearGradient>
      <radialGradient id="glow"><stop offset="0" stopColor="#fff" /><stop offset="1" stopColor="#fff" stopOpacity="0" /></radialGradient>
      <radialGradient id="shadow"><stop offset="0" stopColor="#555" stopOpacity=".8" /><stop offset="1" stopColor="#777" stopOpacity="0" /></radialGradient>
    </defs>
  </Defs>
);

/* orthographic construction grid, centred on the view's origin */
const OrthoGrid = ({ ox, oy, step, w = 640, h = 420 }) => {
  let major = '';
  let minor = '';
  const s = step / 5;
  for (let k = -Math.floor(ox / s); ox + k * s < w; k++) {
    const d = `M${Math.round(ox + k * s) + 0.5} 0V${h}`;
    if (k % 5 === 0) major += d; else minor += d;
  }
  for (let k = -Math.floor(oy / s); oy + k * s < h; k++) {
    const d = `M0 ${Math.round(oy + k * s) + 0.5}H${w}`;
    if (k % 5 === 0) major += d; else minor += d;
  }
  return (
    <g shapeRendering="crispEdges">
      <path d={minor} stroke="#939aa2" />
      <path d={major} stroke="#80858d" />
    </g>
  );
};

const PerspectiveGrid = () => {
  const vx = 306, vy = -24, top = 75, bottom = 406, base = 195;
  let minor = '';
  let major = '';
  for (let k = -700; k <= 700; k++) {
    const xb = base + k * 5.2;
    const t = (top - vy) / (bottom - vy);
    const d = `M${(vx + (xb - vx) * t).toFixed(1)} ${top}L${xb.toFixed(1)} ${bottom}`;
    if (k % 5 === 0) major += d; else minor += d;
  }
  const f = 855, c = 0.061;
  for (let n = -300; n < 400; n++) {
    const depth = 61 + n / 5;
    if (depth <= 0) continue;
    const y = vy + f / (c * depth);
    if (y < top || y > bottom) continue;
    const d = `M0 ${y.toFixed(1)}H640`;
    if (n % 5 === 0) major += d; else minor += d;
  }
  return (
    <g fill="none">
      <path d={minor} stroke="#80858d" strokeOpacity=".18" strokeWidth=".8" />
      <path d={major} stroke="#7b8088" strokeOpacity=".66" />
    </g>
  );
};

const P = props => <path vectorEffect="non-scaling-stroke" fill="none" {...props} />;
const Yellow = ({ thin, thick }) => (
  <g>
    <P d={thin} stroke="#ffff00" strokeWidth="1.200" />
    <P d={thick} stroke="#ffff00" strokeWidth="2" />
  </g>
);
const RED = '#ff2020', GREEN = '#20f820', BLUE = '#2222ff';
const Handle = ({ x, y, c, sx = 13 }) => <rect x={x - sx} y={y - 13} width={sx * 2} height="26" fill="none" stroke={c} strokeWidth="2" vectorEffect="non-scaling-stroke" />;
const PlaneMark = ({ x, y, w = 60, h, v }) => (
  <g>
    <P d={`M${x} ${y}V${y + 60}M${x + w / 2} ${y}V${y + 60}M${x + w} ${y}V${y + 60}`} stroke={v} strokeWidth="1" />
    <P d={`M${x} ${y}H${x + w}M${x} ${y + 30}H${x + w}M${x} ${y + 60}H${x + w}`} stroke={h} strokeWidth="1" />
  </g>
);
const Dots = ({ d, c }) => <P d={d} stroke={c} strokeWidth="1.500" strokeDasharray="1.500 2.500" />;
const Hub = ({ x, y, rx = 9, wx, wy, wr = 15 }) => (
  <g>
    <P d={`M${x} ${y}L${wx} ${wy}`} stroke="#fff" strokeDasharray="1 4" />
    <ellipse cx={wx} cy={wy} rx={wr} ry="15" fill="none" stroke="#fff" vectorEffect="non-scaling-stroke" />
    <ellipse cx={x} cy={y} rx={rx} ry="10" fill="#fff" stroke="#111" strokeWidth="1.300" vectorEffect="non-scaling-stroke" />
  </g>
);

const TopScene = () => (
  <Scene aria-hidden="true">
    <OrthoGrid ox={370} oy={171} step={14.52} />
    <g transform="translate(283 75) scale(.33333)">
      <P d="M263 -300V288" stroke="#4a9a4a" strokeWidth="1.500" />
      <P d="M263 288H1400" stroke="#9a4a4a" strokeWidth="1.500" />
      <path d="M140 430L303 605L325 632L368 445Z" fill="#d5d5d5" />
      <path d="M275 470L325 632L368 445Z" fill="#fff" />
      <path d="M75 290C75 180 160 98 270 98C330 98 375 125 405 160L515 355L533 385C500 410 440 420 390 430C350 465 310 475 270 475C150 475 75 400 75 290Z" fill="url(#sTop)" />
      <path d="M82 340C95 420 180 475 270 475C320 475 360 460 390 430L300 380C260 362 180 345 160 290C140 320 110 345 82 340Z" fill="#a9a9a9" opacity=".55" />
      <ellipse cx="85" cy="330" rx="28" ry="110" fill="url(#shadow)" opacity=".5" transform="rotate(-14 85 330)" />
      <ellipse cx="168" cy="312" rx="20" ry="50" fill="url(#glow)" transform="rotate(-35 168 312)" />
      <ellipse cx="225" cy="342" rx="58" ry="13" fill="url(#shadow)" transform="rotate(22 225 342)" />
      <ellipse cx="405" cy="190" rx="16" ry="50" fill="url(#shadow)" transform="rotate(-28 405 190)" />
      <ellipse cx="460" cy="400" rx="60" ry="12" fill="url(#glow)" transform="rotate(-8 460 400)" />
      <ellipse cx="255" cy="510" rx="18" ry="45" fill="url(#glow)" transform="rotate(-20 255 510)" />
      <Yellow
        thin="M405 160C375 120 330 98 270 98C150 98 75 180 75 290C75 390 160 475 270 475C320 475 360 455 390 430M405 160L515 355L533 385M405 160C470 230 465 370 390 430M139 145L325 632M533 385L127 411M405 160L325 632M140 430L303 605M390 428C450 425 500 410 533 385"
        thick="M139 145C180 250 230 340 300 380C340 405 370 420 390 428L533 385M325 632C290 560 255 440 268 365C280 342 320 345 340 372L390 428"
      />
      <PlaneMark x={424} y={185} h={RED} v={GREEN} />
      <Dots d="M90 366H292" c={RED} />
      <Dots d="M303 378V615" c={GREEN} />
      <P d="M65 380C75 510 170 605 303 605" stroke={BLUE} strokeWidth="2" />
      <P d="M303 335V155" stroke={GREEN} strokeWidth="2" /><path d="M289 155h29l-15-57z" fill={GREEN} />
      <P d="M333 366H515" stroke={RED} strokeWidth="2" /><path d="M514 352v28l57-14z" fill={RED} />
      <Handle x={75} y={366} c={RED} /><Handle x={303} y={630} c={GREEN} />
      <Hub x={304} y={365} wx={213} wy={455} />
    </g>
  </Scene>
);

const FrontScene = () => (
  <Scene aria-hidden="true">
    <OrthoGrid ox={296} oy={163} step={14.34} />
    <g transform="translate(203 -3) scale(.33333)">
      <P d="M279 0V498" stroke="#4a9a4a" strokeWidth="1.500" />
      <P d="M279 498H1400" stroke="#9a4a4a" strokeWidth="1.500" />
      <path d="M540 208C440 230 330 280 280 305C170 365 90 430 90 500C90 590 200 680 315 686L345 686L375 667C420 590 440 520 460 440C475 370 510 270 540 208Z" fill="url(#sFront)" />
      <ellipse cx="385" cy="265" rx="120" ry="9" fill="url(#glow)" transform="rotate(-29 385 265)" />
      <ellipse cx="120" cy="560" rx="22" ry="90" fill="url(#shadow)" opacity=".6" transform="rotate(-25 120 560)" />
      <ellipse cx="245" cy="535" rx="17" ry="38" fill="url(#glow)" transform="rotate(35 245 535)" />
      <ellipse cx="262" cy="625" rx="20" ry="60" fill="url(#shadow)" transform="rotate(-15 262 625)" />
      <ellipse cx="365" cy="575" rx="75" ry="25" fill="url(#shadow)" transform="rotate(-15 365 575)" opacity=".35" />
      <ellipse cx="390" cy="552" rx="50" ry="13" fill="url(#glow)" transform="rotate(-18 390 552)" />
      <ellipse cx="330" cy="662" rx="50" ry="22" fill="url(#shadow)" opacity=".8" />
      <ellipse cx="345" cy="615" rx="60" ry="11" fill="url(#glow)" transform="rotate(-8 345 615)" />
      <ellipse cx="285" cy="565" rx="14" ry="32" fill="url(#glow)" />
      <ellipse cx="235" cy="635" rx="8" ry="45" fill="url(#glow)" transform="rotate(-30 235 635)" />
      <P d="M76 455C82 590 180 686 315 686" stroke={GREEN} strokeWidth="2" />
      <Yellow
        thin="M90 499H400M540 208C400 240 150 350 137 490C135 590 230 670 315 684M540 208C480 230 160 400 153 500C155 600 230 665 315 684M153 500C200 560 260 560 320 500C370 450 390 390 416 312L500 245L540 208M416 312C440 350 465 380 464 440C460 480 430 495 400 500M416 312C412 400 404 480 406 500C405 580 370 680 345 685L315 684"
        thick="M540 208C470 280 400 400 402 500C340 550 277 600 277 640C280 670 300 682 330 686"
      />
      <PlaneMark x={436} y={265} h={RED} v={BLUE} />
      <Dots d="M104 446H305" c={RED} /><Dots d="M315 458V672" c={BLUE} />
      <P d="M315 415V235" stroke={BLUE} strokeWidth="2" /><path d="M301 236h29l-14-58z" fill={BLUE} />
      <P d="M345 446H527" stroke={RED} strokeWidth="2" /><path d="M526 432v28l57-14z" fill={RED} />
      <Handle x={90} y={446} c={RED} /><Handle x={315} y={686} c={BLUE} />
      <Hub x={317} y={446} wx={225} wy={536} />
    </g>
  </Scene>
);

const RightScene = () => (
  <Scene aria-hidden="true">
    <OrthoGrid ox={224} oy={163} step={17.7} />
    <g transform="translate(-3 -3) scale(.33333)">
      <P d="M681 0V500" stroke="#4a9a4a" strokeWidth="1.500" />
      <P d="M681 500H1900" stroke="#9a4a4a" strokeWidth="1.500" />
      <path d="M560 142L836 270C870 370 905 480 908 550C900 640 760 690 560 712C430 725 340 733 263 733C370 715 470 620 467 570C460 540 455 520 455 502C455 400 475 280 525 205Z" fill="url(#sRight)" />
      <path d="M512 502C570 540 605 580 608 634C560 690 420 722 263 733C370 715 470 620 467 570C462 530 458 520 455 502Z" fill="#b4b4b4" opacity=".6" />
      <path d="M608 634C740 560 836 400 836 270C870 370 905 480 908 550C900 640 760 690 560 705Z" fill="#f0f0f0" opacity=".8" />
      <ellipse cx="645" cy="370" rx="42" ry="115" fill="url(#glow)" transform="rotate(-8 645 370)" />
      <ellipse cx="610" cy="580" rx="36" ry="75" fill="url(#shadow)" transform="rotate(-25 610 580)" opacity=".85" />
      <ellipse cx="475" cy="400" rx="22" ry="150" fill="url(#shadow)" opacity=".5" transform="rotate(8 475 400)" />
      <ellipse cx="545" cy="655" rx="55" ry="35" fill="url(#glow)" />
      <ellipse cx="420" cy="695" rx="50" ry="15" fill="url(#glow)" transform="rotate(-28 420 695)" />
      <ellipse cx="735" cy="500" rx="16" ry="160" fill="url(#glow)" transform="rotate(36 735 500)" />
      <Yellow
        thin="M560 142L836 270C870 370 908 480 910 540C908 565 890 555 857 503M836 270C840 400 740 560 600 640C540 680 400 725 263 733M836 270C740 390 620 480 530 502M455 502H857M560 142C500 190 510 280 620 360C700 420 780 470 857 503C850 620 620 710 263 733M560 142C545 300 530 400 529 502C525 600 430 715 263 733"
        thick="M560 142C520 270 510 400 512 502C570 540 605 580 604 620C590 690 450 725 263 733"
      />
      <PlaneMark x={706} y={257} h={GREEN} v={BLUE} />
      <Dots d="M280 438H576" c={GREEN} /><Dots d="M588 448V718" c={BLUE} />
      <P d="M347 437C352 560 440 676 586 676" stroke={RED} strokeWidth="2" />
      <P d="M588 405V225" stroke={BLUE} strokeWidth="2" /><path d="M573 226h29l-15-58z" fill={BLUE} />
      <P d="M618 437H798" stroke={GREEN} strokeWidth="2" /><path d="M797 423v28l57-14z" fill={GREEN} />
      <Handle x={264} y={438} c={GREEN} /><Handle x={588} y={732} c={BLUE} />
      <Hub x={589} y={437} wx={496} wy={526} />
    </g>
  </Scene>
);

const PerspectiveScene = () => (
  <Scene aria-hidden="true">
    <PerspectiveGrid />
    <g transform="translate(-3 -5) scale(.40179 .33333)">
      <P d="M620 627L1560 632" stroke="#3f943f" strokeWidth="2" />
      <P d="M620 627L488 1230" stroke="#944040" strokeWidth="1.500" />
      <path d="M480 358L735 458C750 530 795 620 795 665C790 740 690 800 560 822C500 835 470 835 470 835C400 850 340 855 298 852C380 810 450 770 465 700C465 680 445 640 443 600C440 500 450 400 480 358Z" fill="url(#sPersp)" />
      <path d="M470 670C500 700 560 700 562 740C550 800 440 840 298 852C380 810 450 770 465 700Z" fill="#b4b4b4" opacity=".6" />
      <path d="M560 780C660 720 735 600 735 458C750 530 795 620 795 665C790 740 690 800 540 822Z" fill="#f3f3f3" opacity=".85" />
      <ellipse cx="585" cy="700" rx="30" ry="75" fill="url(#shadow)" opacity=".6" />
      <ellipse cx="530" cy="710" rx="45" ry="40" fill="url(#shadow)" opacity=".4" />
      <ellipse cx="452" cy="500" rx="14" ry="140" fill="url(#shadow)" opacity=".7" />
      <ellipse cx="495" cy="785" rx="36" ry="26" fill="url(#glow)" />
      <ellipse cx="370" cy="828" rx="40" ry="14" fill="url(#glow)" transform="rotate(-20 370 828)" />
      <ellipse cx="668" cy="620" rx="15" ry="150" fill="url(#glow)" transform="rotate(28 668 620)" />
      <Yellow
        thin="M480 358L735 458L795 665L755 585C720 720 560 870 298 852M480 358C440 380 460 440 560 490L755 585M735 458C740 600 640 740 540 790C450 830 360 850 298 852M735 458C680 560 600 670 500 682C440 680 430 630 455 605C510 560 640 560 755 585M480 358C520 440 530 540 515 620C490 750 380 810 298 852"
        thick="M480 358C472 470 470 580 470 670C500 700 560 700 562 740C550 800 440 840 298 852"
      />
      <PlaneMark x={638} y={407} w={52} h={GREEN} v={BLUE} />
      <Dots d="M300 582H530" c={GREEN} /><Dots d="M562 530L545 572" c={RED} /><Dots d="M542 595L547 828" c={BLUE} />
      <P d="M343 580C365 540 470 520 562 520" stroke={BLUE} strokeWidth="2" />
      <P d="M343 580C350 700 440 806 547 806" stroke={RED} strokeWidth="2" />
      <P d="M563 520C566 600 562 720 547 806" stroke={GREEN} strokeWidth="2" />
      <P d="M541 552L535 375" stroke={BLUE} strokeWidth="2" /><path d="M523 376h24l-13-58z" fill={BLUE} />
      <P d="M565 583H715" stroke={GREEN} strokeWidth="2" /><path d="M714 569v29l50-15z" fill={GREEN} />
      <P d="M538 595L519 650" stroke={RED} strokeWidth="2" /><path d="M507 647l24 8-20 13z" fill={RED} />
      <Handle x={287} y={582} c={GREEN} sx={11} /><Handle x={564} y={514} c={RED} sx={9} /><Handle x={548} y={843} c={BLUE} sx={9} />
      <Hub x={542} y={582} rx={7} wx={481} wy={640} wr={12} />
    </g>
  </Scene>
);

const Axis = ({ up, side, down }) => (
  <AxisMark width="60" height="60" viewBox="0 0 60 60" fontSize="14" fontFamily="Open Sans, sans-serif" fill="#62676d">
    <path d={down ? 'M4.500 15V53M4 44.500H34' : 'M4.500 15V44M4 44.500H34'} stroke="#5c6167" fill="none" />
    <text x="7" y="14">{up}</text>
    <text x="37" y={down ? 43 : 45}>{side}</text>
    {down && <text x="6" y="54">{down}</text>}
  </AxisMark>
);

const Caret = ({ up }) => (
  <svg width="7" height="4" viewBox="0 0 7 4"><path d={up ? 'M0 4h7L3.500 0z' : 'M0 0h7L3.500 4z'} fill="currentColor" /></svg>
);
const Chevron = () => (
  <svg width="10" height="6" viewBox="0 0 10 6"><path d="M1 1l4 4 4-4" fill="none" stroke="#444" strokeWidth="1.200" /></svg>
);
const SpinPair = ({ name, inset }) => (
  <Spinner $inset={inset}>
    <SpinButton aria-label={`${name} up`}><Caret up /></SpinButton>
    <SpinButton aria-label={`${name} down`}><Caret /></SpinButton>
  </Spinner>
);

const Viewport = ({ name, active, scene, children }) => (
  <ViewportBox>
    {scene}
    {children}
    <ViewTitle $active={active}>{name}<TitleDrop><Caret /></TitleDrop></ViewTitle>
  </ViewportBox>
);

/* ---------- data ---------- */
const menus = ['File', 'Edit', 'View', 'Curve', 'Surface', 'Solid', 'Mesh', 'Dimension', 'Transform', 'Tools', 'Analyze', 'Render', 'Panels', 'Help'];
const toolTabs = ['Standard', 'Visibility', 'CPlanes', 'Set View', 'Display', 'Select', 'Viewport Layout', 'Transform', 'Curve Tools', 'Surface Tools', 'Solid Tools', 'Mesh Tools', 'Render Tools', 'Drafting', 'New in V6'];
const tools = ['new', 'open', 'save', 'print', 'props', 'cut', 'copy', 'paste', 'undo', 'hand', 'rotate', 'zoomDyn', 'zoomWin', 'zoomExt', 'zoomSel', 'undoView', 'views', 'car', 'cplane', 'radius', 'shapes', 'bulb', 'lock', 'layers', 'wheel', 'shade', 'shadeTex', 'render', 'spot', 'gear', 'dims', 'hopper', 'help'];
const sideTools = ['pointer', 'point', 'polyline', 'curve', 'circle', 'ellipse', 'arc', 'rect', 'polygon', 'fillet', 'surf', 'blend', 'box', 'boolean', 'project', 'mesh', 'join', 'explode', 'trim', 'split', 'group', 'ungroup', 'pts', 'cpts', 'text', 'move', 'copies', 'rotate2', 'cage', 'extrude', 'array', 'align', 'bend', 'check', 'solids', 'pyramid'];
const panelTabs = [['Properties', 'wheelPage'], ['Layers', 'layersTab'], ['Rendering', 'renderTab'], ['Materials', 'tube'], ['Libraries', 'open'], ['Help', 'helpTab']];
const pageButtons = ['wheelPage', 'tube', 'texture', 'decal', 'cubeBlue', 'cubeTeal', 'book', 'orange', 'data'];
const osnaps = [['End', 1], ['Near'], ['Point', 1], ['Mid'], ['Cen'], ['Int', 1], ['Perp'], ['Tan'], ['Quad'], ['Knot'], ['Vertex']];

const ComboRow = ({ label, value, mark }) => (
  <PropRow>
    <span />
    <PropLabel htmlFor={label}>{label}</PropLabel>
    <PropValue $pad={mark ? 4 : 3}>
      {mark}
      <Combo id={label} defaultValue={value}><option>{value}</option></Combo>
      <DropMark><Chevron /></DropMark>
    </PropValue>
  </PropRow>
);
const CheckRow = ({ label, checked }) => (
  <PropRow>
    <span />
    <PropLabel htmlFor={label}>{label}</PropLabel>
    <PropValue $pad={2}><Check id={label} defaultChecked={checked} /></PropValue>
  </PropRow>
);

export default function App() {
  return (
    <Screen>
      <GlobalStyle />
      <SharedDefs />
      <Desktop>
        <DesktopEdge>
          <DesktopLabel $y={59}>R</DesktopLabel>
          <DesktopLabel $y={463}>N</DesktopLabel>
          <DesktopLabel $y={766}>La</DesktopLabel>
          <DesktopLabel $y={968}>St</DesktopLabel>
        </DesktopEdge>
        <AppWindow>
          <TitleBar>
            <RhinoLogo size={16} />
            <TitleText>test004 (1 MB) - Rhinoceros 6 Educational Lab License</TitleText>
            <WinButton aria-label="Minimize"><svg width="10" height="10"><path d="M0 5.500h10" stroke="#000" /></svg></WinButton>
            <WinButton aria-label="Maximize"><svg width="10" height="10"><path d="M.5.500h9v9h-9z" stroke="#000" fill="none" /></svg></WinButton>
            <WinButton aria-label="Close"><svg width="10" height="10"><path d="M0 0l10 10M10 0L0 10" stroke="#000" /></svg></WinButton>
          </TitleBar>
          <MenuBar>{menus.map(m => <button key={m}>{m}</button>)}</MenuBar>

          <CommandArea>
            <History>Display mode set to "Shaded".<br />1 surface added to selection.</History>
            <Scroller>
              <svg width="9" height="22" viewBox="0 0 9 22" fill="none" stroke="#555" strokeWidth="1.800"><path d="M1.500 5l3-3 3 3M1.500 16l3 3 3-3" /></svg>
            </Scroller>
            <Prompt>Command: <PromptInput /></Prompt>
            <SpinPair name="History" />
          </CommandArea>

          <ToolTabs>
            {toolTabs.map((t, i) => <ToolTab key={t} $active={i === 0}>{t}</ToolTab>)}
            <TabGear aria-label="Toolbar options"><GearArt /></TabGear>
          </ToolTabs>
          <ToolRow>{tools.map(t => <ToolButton key={t} aria-label={t}><Icon name={t} /></ToolButton>)}</ToolRow>

          <Main>
            <SideTools>
              <Grip $m="0 6px 0 2px" />
              <SideGrid>{sideTools.map(t => <ToolButton key={t} aria-label={t}><Icon name={t} /></ToolButton>)}</SideGrid>
            </SideTools>

            <Center>
              <Viewports>
                <Viewport name="Top" scene={<TopScene />}><Axis up="y" side="x" /></Viewport>
                <Viewport name="Perspective" active scene={<PerspectiveScene />}>
                  <SnipGhost>Rectangular Snip</SnipGhost>
                  <Axis up="z" side="y" down="x" />
                </Viewport>
                <Viewport name="Front" scene={<FrontScene />}><Axis up="z" side="x" /></Viewport>
                <Viewport name="Right" scene={<RightScene />}><Axis up="z" side="y" /></Viewport>
              </Viewports>
              <ViewTabs>
                <ViewTab $plain>Perspective</ViewTab>
                <ViewTab>Top</ViewTab>
                <ViewTab>Front</ViewTab>
                <ViewTab>Right</ViewTab>
                <ViewTab $plain aria-label="New viewport">
                  <svg width="12" height="10" viewBox="0 0 12 10"><path d="M4 .5h3v3h3v3H7v3H4v-3H1v-3h3z" fill="#fff" stroke="#666" /></svg>
                </ViewTab>
              </ViewTabs>
            </Center>

            <span />

            <Panel>
              <Grip $m="0 1px 0 1px" />
              <PanelTabs>
                {panelTabs.map(([t, ic], i) => <PanelTab key={t} $active={i === 0}><Icon name={ic} size={16} tight />{t}</PanelTab>)}
                <TabGear aria-label="Panel options"><GearArt s={14} fill="#bbb" c="#b5b5b5" /></TabGear>
              </PanelTabs>
              <PanelBody>
                <PageButtons>
                  {pageButtons.map((b, i) => <PageButton key={b} $active={i === 0} aria-label={b}><Icon name={b} size={22} tight /></PageButton>)}
                </PageButtons>
                <Sheet>
                  <GroupTitle>Object</GroupTitle>
                  <PropRow><span /><PropLabel>Type</PropLabel><PropValue>closed surface</PropValue></PropRow>
                  <PropRow><span /><PropLabel htmlFor="name">Name</PropLabel><PropValue><TextBox id="name" /></PropValue></PropRow>
                  <ComboRow label="Layer" value="Default" mark={<Swatch $c="#000" />} />
                  <ComboRow label="Display Color" value="By Layer" mark={<Swatch $c="#fff" />} />
                  <ComboRow label="Linetype" value="By Layer" />
                  <ComboRow label="Print Color" value="By Layer" mark={<svg width="15" height="15" viewBox="0 0 15 15"><path d="M7.500 1l6 6.500-6 6.500-6-6.500z" fill="#fff" stroke="#000" /></svg>} />
                  <ComboRow label="Print Width" value="By Layer" />
                  <PropRow>
                    <span /><PropLabel htmlFor="link">Hyperlink</PropLabel>
                    <PropValue><TextBox id="link" /><MoreButton>...</MoreButton></PropValue>
                  </PropRow>
                  <GroupTitle>Render Mesh Settings</GroupTitle>
                  <CheckRow label="Custom Mesh" />
                  <PropRow $dim><span /><PropLabel>Settings</PropLabel><PropValue $pad={1}><AdjustButton disabled>Adjust...</AdjustButton></PropValue></PropRow>
                  <GroupTitle>Rendering</GroupTitle>
                  <CheckRow label="Casts shadows" checked />
                  <CheckRow label="Receives shadows" checked />
                  <GroupTitle>Isocurve Density</GroupTitle>
                  <PropRow>
                    <span /><PropLabel htmlFor="density">Density</PropLabel>
                    <PropValue><TextBox id="density" defaultValue="1" /><SpinPair name="Density" inset={2} /></PropValue>
                  </PropRow>
                  <CheckRow label="Show surface isocurve" checked />
                  <PageActions>
                    <WideButton>Match</WideButton>
                    <WideButton>Details...</WideButton>
                  </PageActions>
                </Sheet>
              </PanelBody>
            </Panel>
          </Main>

          <OsnapBar>
            {osnaps.map(([n, on]) => <OsnapItem key={n}><Check defaultChecked={!!on} />{n}</OsnapItem>)}
            <OsnapItem $wide><Check disabled />Project</OsnapItem>
            <OsnapItem $wide><Check disabled />Disable</OsnapItem>
          </OsnapBar>
          <StatusBar>
            <StatusCell $w={49} $on>World</StatusCell>
            <StatusCell $w={88}>x -19.687</StatusCell>
            <StatusCell $w={88}>y -2.437</StatusCell>
            <StatusCell $w={88}>z 0.000</StatusCell>
            <StatusCell $w={88}>Inches</StatusCell>
            <StatusCell $w={168} $start><Swatch $c="#000" />Default</StatusCell>
            <StatusCell>Grid Snap</StatusCell>
            <StatusCell>Ortho</StatusCell>
            <StatusCell>Planar</StatusCell>
            <StatusCell $on>Osnap</StatusCell>
            <StatusCell $w={74} $on>SmartTrack</StatusCell>
            <StatusCell $on>Gumball</StatusCell>
            <StatusCell>Record History</StatusCell>
            <StatusCell>Filter</StatusCell>
            <StatusNote>Minutes from last save: 0</StatusNote>
          </StatusBar>
        </AppWindow>
        <DesktopEdge $right />
      </Desktop>

      <Taskbar>
        <TaskButton aria-label="Start" $start>
          <svg width="16" height="16" viewBox="0 0 16 16" fill="#fff"><path d="M0 2.300l6.500-.9v6.200H0zM7.300 1.300L16 0v7.600H7.300zM0 8.400h6.500v6.200L0 13.700zM7.300 8.400H16V16l-8.700-1.300z" /></svg>
        </TaskButton>
        <SearchBox>
          <svg width="17" height="17" viewBox="0 0 17 17" fill="none" stroke="#222" strokeWidth="1.300"><circle cx="10.500" cy="6.500" r="5.500" /><path d="M6.500 10.500L1 16" /></svg>
          <SearchInput aria-label="Search" placeholder="Type here to search" />
        </SearchBox>
        <TaskButton aria-label="Cortana"><svg width="18" height="18"><circle cx="9" cy="9" r="6.500" fill="none" stroke="#fff" strokeWidth="2" /></svg></TaskButton>
        <TaskButton aria-label="Task view"><svg width="18" height="16" viewBox="0 0 18 16" fill="none" stroke="#fff" strokeWidth="1.300"><path d="M1 0v3h10V0M1 16v-3h10v3M1 5.500h10v5H1zM15 0v3M15 6v10" /><rect x="14" y="4" width="2.500" height="2.500" fill="#fff" stroke="none" /></svg></TaskButton>
        <TaskButton aria-label="Edge"><svg width="22" height="22" viewBox="0 0 22 22"><path d="M1 10C2 4 6 1 11 1c6 0 10 4 10 9v3H8c0 5 7 6 12 3v4c-8 4-16 0-16-7 0-3 2-6 5-7-1 1-1.500 2-1.500 3H15c0-6-9-5-14 1z" fill="#0a7be0" /></svg></TaskButton>
        <TaskButton aria-label="File Explorer"><svg width="22" height="20" viewBox="0 0 22 20"><path d="M0 1h8l2 2h12v16H0z" fill="#f5c04a" /><path d="M0 6h22v13H0z" fill="#ffdc84" /><path d="M3 19v-6l3-2h10l3 2v6h-4v-4H7v4z" fill="#3a93d8" /></svg></TaskButton>
        <TaskButton aria-label="Store"><svg width="22" height="24" viewBox="0 0 22 24"><path d="M7 6V4c0-4 8-4 8 0v2" fill="none" stroke="#fff" strokeWidth="1.300" /><path d="M0 6h22v15l-2 2H2l-2-2z" fill="#fff" /><path d="M6 9h4.500v4.500H6z" fill="#f0502a" /><path d="M11.500 9H16v4.500h-4.500z" fill="#7fba00" /><path d="M6 14.500h4.500V19H6z" fill="#00a4ef" /><path d="M11.500 14.500H16V19h-4.500z" fill="#ffb900" /></svg></TaskButton>
        <TaskButton aria-label="Mail"><svg width="24" height="22" viewBox="0 0 24 22"><path d="M0 8l12-8 12 8v6H0z" fill="#0a62b8" /><path d="M2 8h20l-10 8z" fill="#f1f1f1" /><path d="M0 8l12 8 12-8v14H0z" fill="#2bb5f2" /><path d="M0 22l12-8 12 8z" fill="#1490df" /></svg></TaskButton>
        <TaskButton aria-label="Chrome" $open><svg width="22" height="22" viewBox="0 0 22 22"><circle cx="11" cy="11" r="11" fill="#ffcd40" /><path d="M1.500 5.500A11 11 0 0 1 20.500 5.500H11a5.500 5.500 0 0 0-5 3.500z" fill="#e34133" /><path d="M1.500 5.500L6.500 14 11 16.500 8 21.600A11 11 0 0 1 1.500 5.500z" fill="#1aa260" /><circle cx="11" cy="11" r="5" fill="#f1f1f1" /><circle cx="11" cy="11" r="4" fill="#4a86f0" /></svg></TaskButton>
        <TaskButton aria-label="Rhinoceros" $open $active><RhinoLogo size={24} /></TaskButton>
        <Tray>
          <TrayButton aria-label="Hidden icons"><svg width="14" height="8" viewBox="0 0 14 8"><path d="M1 7l6-6 6 6" fill="none" stroke="#fff" strokeWidth="1.300" /></svg></TrayButton>
          <TrayButton aria-label="Network"><svg width="17" height="14" viewBox="0 0 17 14" fill="none" stroke="#fff" strokeWidth="1.200"><path d="M5 1.500h11v8H5M8 12.500h6M11 9.500v3M1 1.500h4v4H1zM3 5.500v5h2" /></svg></TrayButton>
          <TrayButton aria-label="Volume"><svg width="15" height="12" viewBox="0 0 15 12" fill="none" stroke="#fff" strokeWidth="1.200"><path d="M1 4h2l3-3v10L3 8H1zM9.500 4l4.500 4M14 4l-4.500 4" /></svg></TrayButton>
          <Clock>8:50 AM<br />3/3/2020</Clock>
          <TrayButton $w={38} aria-label="Notifications">
            <svg width="26" height="26" viewBox="0 0 26 26"><path d="M2 3h16v12h-5l-3 4v-4H2z" fill="#fff" /><path d="M5 6.500h10M5 9h10M5 11.500h7" stroke="#222" /><circle cx="17.500" cy="18" r="7.500" fill="#2c3038" stroke="#9a9a9a" /><text x="14.500" y="22.500" fontSize="12" fill="#fff">1</text></svg>
          </TrayButton>
          <ShowDesktop aria-label="Show desktop" />
        </Tray>
      </Taskbar>
    </Screen>
  );
}
